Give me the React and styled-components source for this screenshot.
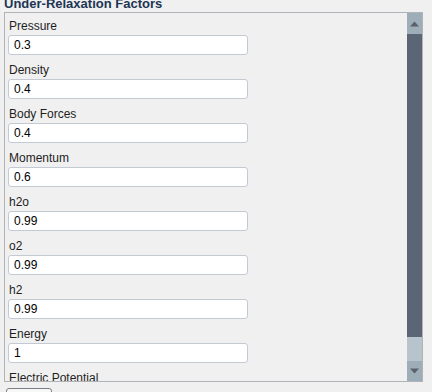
import React from "react";
import styled, { createGlobalStyle } from "styled-components";

const Global = createGlobalStyle`
  html, body { margin: 0; padding: 0; background: #f0f0f0; }
  body { font-family: "Liberation Sans", Arial, sans-serif; overflow: hidden; }
`;

const Page = styled.div`
  width: 432px;
  height: 392px;
  overflow: hidden;
  padding-left: 4px;
  box-sizing: border-box;
`;

const Title = styled.div`
  margin-top: -4px;
  height: 15px;
  line-height: 15px;
  margin-bottom: 1px;
  font-size: 13px;
  font-weight: bold;
  color: #1c3553;
  white-space: nowrap;
`;

const Panel = styled.div`
  width: 419px;
  height: 370px;
  box-sizing: border-box;
  border: 1px solid #b0b4b8;
  display: flex;
  overflow: hidden;
`;

const Content = styled.div`
  flex: 1;
  overflow: hidden;
  padding: 4px 0 0 3px;
`;

const Group = styled.div`
  display: flex;
  flex-direction: column;
  margin-bottom: 6px;
`;

const Label = styled.div`
  font-size: 12px;
  line-height: 16px;
  height: 16px;
  padding-left: 1px;
  color: #1e1e1e;
  margin-top: 1px;
  margin-bottom: 1px;
  white-space: nowrap;
`;

const Input = styled.div`
  width: 240px;
  height: 20px;
  box-sizing: border-box;
  border: 1px solid #c3cad3;
  border-radius: 3px;
  background: #fff;
  font-size: 12px;
  line-height: 18px;
  padding-left: 5px;
  color: #000;
`;

const Scrollbar = styled.div`
  width: 15px;
  display: flex;
  flex-direction: column;
`;

const ArrowBtn = styled.div`
  height: ${(p) => p.$h}px;
  background: #9eaeb8;
  display: flex;
  align-items: center;
  justify-content: center;
`;

const Thumb = styled.div`
  height: 303px;
  background: #5c6575;
`;

const Track = styled.div`
  flex: 1;
  background: #b7c4cc;
`;

const Footer = styled.div`
  padding-top: 6px;
  padding-left: 2px;
`;

const Button = styled.div`
  width: 46px;
  height: 22px;
  box-sizing: border-box;
  border: 1px solid #7a7f86;
  border-radius: 3px;
  background: #f7f7f7;
`;

const Arrow = ({ down }) => (
  <svg width="9" height="6" viewBox="0 0 9 6">
    <polygon
      points={down ? "0,0.5 9,0.5 4.5,5.5" : "0,5.5 9,5.5 4.5,0.5"}
      fill="#5a616c"
    />
  </svg>
);

const fields = [
  ["Pressure", "0.3"],
  ["Density", "0.4"],
  ["Body Forces", "0.4"],
  ["Momentum", "0.6"],
  ["h2o", "0.99"],
  ["o2", "0.99"],
  ["h2", "0.99"],
  ["Energy", "1"],
  ["Electric Potential", "1"],
];

export default function App() {
  return (
    <>
      <Global />
      <Page>
        <Title>Under-Relaxation Factors</Title>
        <Panel>
          <Content>
            {fields.map(([l, v]) => (
              <Group key={l}>
                <Label>{l}</Label>
                <Input>{v}</Input>
              </Group>
            ))}
          </Content>
          <Scrollbar>
            <ArrowBtn $h={21}>
              <Arrow />
            </ArrowBtn>
            <Thumb />
            <Track />
            <ArrowBtn $h={20}>
              <Arrow down />
            </ArrowBtn>
          </Scrollbar>
        </Panel>
        <Footer>
          <Button />
        </Footer>
      </Page>
    </>
  );
}
